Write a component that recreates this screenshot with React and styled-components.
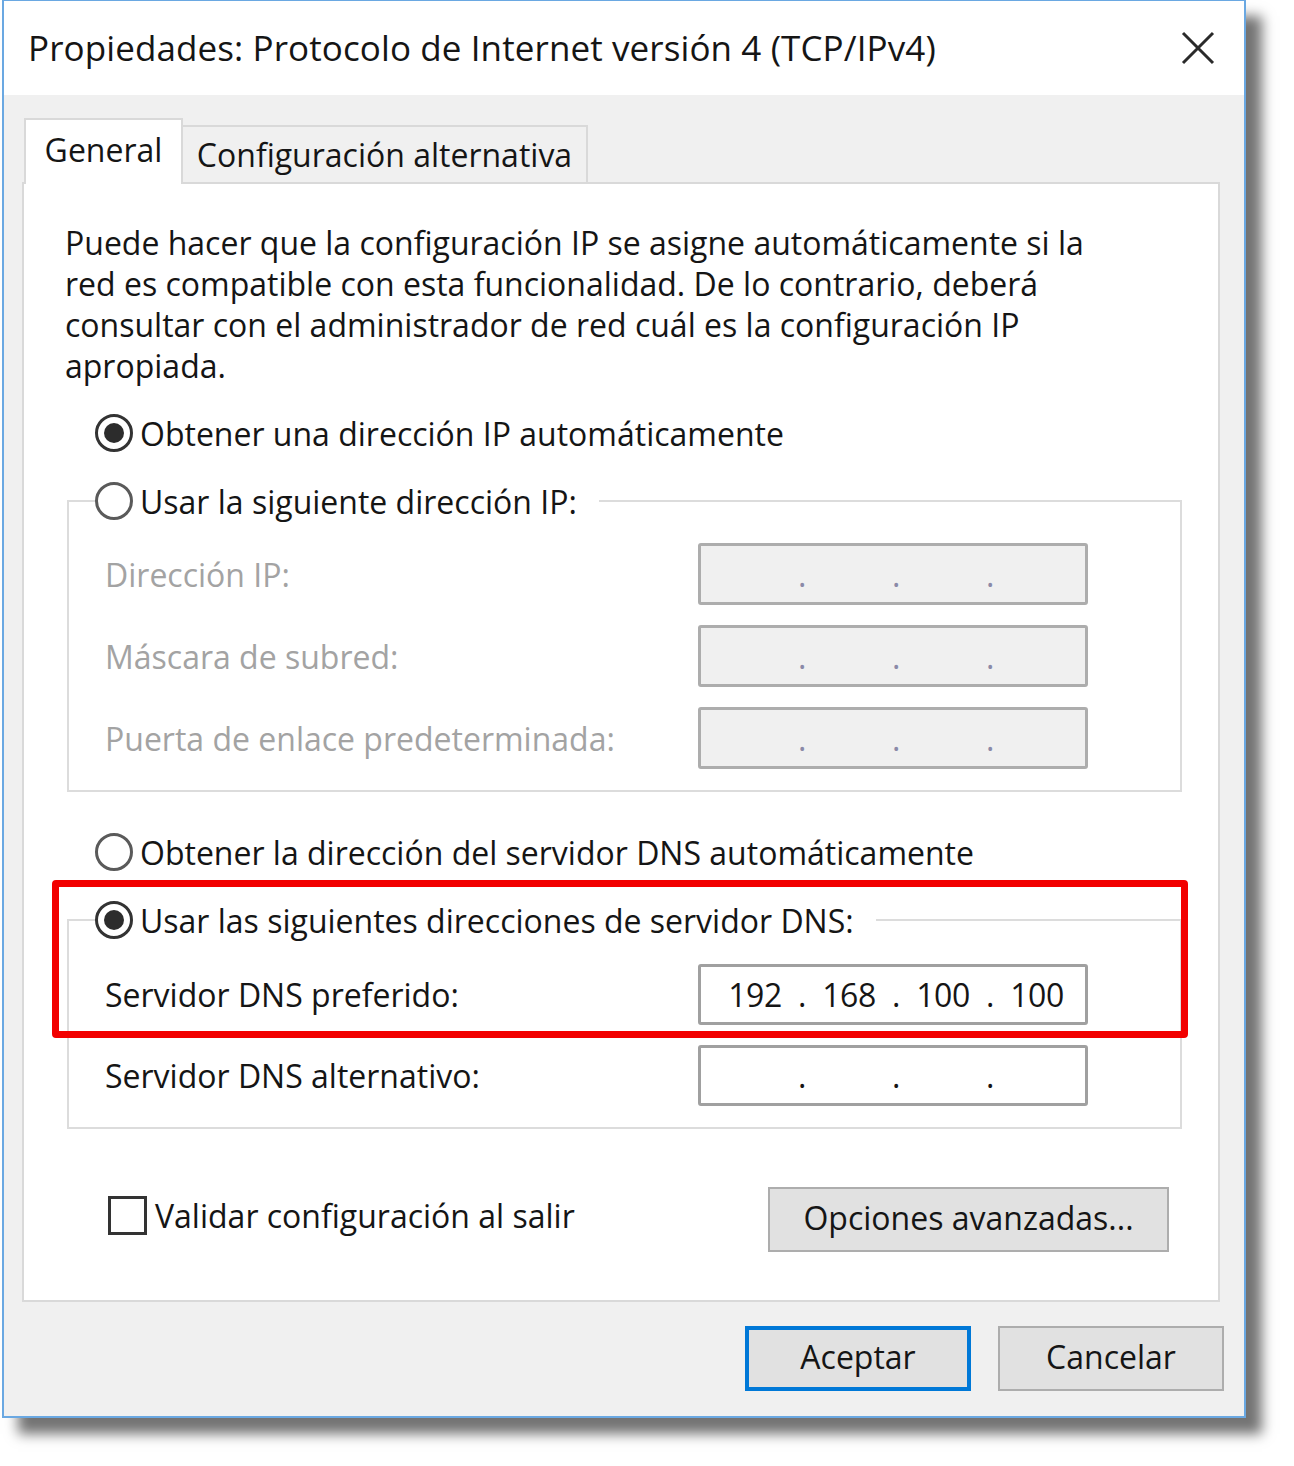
import React from 'react';
import styled, { createGlobalStyle } from 'styled-components';

const GlobalStyle = createGlobalStyle`
  html, body {
    margin: 0;
    padding: 0;
    background: #ffffff;
  }
  body {
    font-family: "Open Sans", "Noto Sans", sans-serif;
    color: #111;
  }
`;

const Page = styled.div`
  width: 1294px;
  height: 1466px;
  padding: 0 0 0 2px;
  box-sizing: border-box;
`;

const Window = styled.div`
  width: 1244px;
  height: 1418px;
  box-sizing: border-box;
  border: 2px solid #6aa8e2;
  border-top-width: 1px;
  background: #f0f0f0;
  box-shadow: 16px 16px 12px rgba(0, 0, 0, 0.55);
  display: flex;
  flex-direction: column;
`;

const TitleBar = styled.div`
  height: 94px;
  flex: none;
  background: #ffffff;
  display: flex;
  align-items: center;
  justify-content: space-between;
  padding: 0 28px 0 24px;
  box-sizing: border-box;
`;

const Title = styled.div`
  font-size: 35px;
  letter-spacing: 0.1px;
  color: #151515;
  margin-top: -2px;
`;

const Content = styled.div`
  flex: 1;
  display: flex;
  flex-direction: column;
  padding: 23px 24px 0 18px;
  min-height: 0;
`;

const Tabs = styled.div`
  display: flex;
  align-items: flex-end;
  padding-left: 2px;
  position: relative;
  z-index: 1;
  margin-bottom: -2px;
`;

const Tab = styled.div`
  box-sizing: border-box;
  display: flex;
  align-items: center;
  justify-content: center;
  font-size: 32px;
  color: #151515;
  border: 2px solid #d9d9d9;
  border-bottom: ${p => (p.$active ? 'none' : '2px solid #d9d9d9')};
  background: ${p => (p.$active ? '#ffffff' : '#f0f0f0')};
  width: ${p => p.$w}px;
  height: ${p => (p.$active ? 66 : 59)}px;
  padding-bottom: ${p => (p.$active ? 6 : 0)}px;
  margin-left: ${p => (p.$active ? 0 : -2)}px;
`;

const Panel = styled.div`
  flex: 1;
  background: #ffffff;
  border: 2px solid #d9d9d9;
  padding: 38px 36px 0 41px;
  display: flex;
  flex-direction: column;
`;

const Text = styled.p`
  margin: 0;
  font-size: 32px;
  line-height: 41px;
  white-space: nowrap;
  color: #151515;
`;

const RadioRow = styled.label`
  display: flex;
  align-items: center;
  gap: 7px;
  height: 42px;
  margin-left: ${p => p.$indent || 0}px;
  margin-top: ${p => p.$top || 0}px;
  font-size: 32px;
  color: #151515;
  white-space: nowrap;
`;

const RadioDot = styled.span`
  width: 38px;
  height: 38px;
  box-sizing: border-box;
  border-radius: 50%;
  border: 3px solid ${p => (p.$checked ? '#333' : '#5a5a5a')};
  background: #fff;
  display: flex;
  align-items: center;
  justify-content: center;
  flex: none;
  &::after {
    content: '';
    display: ${p => (p.$checked ? 'block' : 'none')};
    width: 20px;
    height: 20px;
    border-radius: 50%;
    background: #2c2c2c;
  }
`;

const GroupWrap = styled.div`
  position: relative;
  margin: ${p => p.$top || 0}px 0 0 2px;
`;

const Group = styled.fieldset`
  margin: 0;
  min-inline-size: 0;
  border: 2px solid #dcdcdc;
  padding: ${p => p.$padTop}px 92px ${p => p.$padBottom}px 36px;
  display: flex;
  flex-direction: column;
  gap: 20px;
`;

const Legend = styled.legend`
  padding: 0 22px 0 0;
  margin-left: -10px;
`;

const FieldRow = styled.div`
  display: grid;
  grid-template-columns: 1fr 390px;
  align-items: center;
`;

const FieldLabel = styled.span`
  font-size: 32px;
  white-space: nowrap;
  color: ${p => (p.$disabled ? '#a3a3a3' : '#151515')};
`;

const IpBox = styled.div`
  box-sizing: border-box;
  height: ${p => p.$h || 62}px;
  border: 3px solid ${p => (p.$disabled ? '#adadad' : '#a0a0a0')};
  border-radius: 3px;
  background: ${p => (p.$disabled ? '#f0f0f0' : '#ffffff')};
  display: flex;
  align-items: center;
  padding-left: 11px;
  font-size: 32px;
  letter-spacing: -0.5px;
  color: #151515;
`;

const Octet = styled.span`
  width: 86px;
  text-align: center;
`;

const IpDot = styled.span`
  width: 8px;
  text-align: center;
  color: ${p => (p.$disabled ? '#8a8aa8' : '#151515')};
`;

const Highlight = styled.div`
  position: absolute;
  left: -15px;
  right: -6px;
  top: -19px;
  height: 158px;
  box-sizing: border-box;
  border: 7px solid #f20000;
  border-radius: 4px;
  pointer-events: none;
`;

const BottomRow = styled.div`
  display: flex;
  justify-content: space-between;
  align-items: flex-start;
  margin-top: 58px;
  padding-left: 43px;
  padding-right: 13px;
`;

const CheckRow = styled.label`
  display: flex;
  align-items: center;
  gap: 8px;
  margin-top: 7px;
  font-size: 32px;
  color: #151515;
`;

const CheckBox = styled.span`
  width: 39px;
  height: 39px;
  box-sizing: border-box;
  border: 3px solid #333;
  background: #fff;
  flex: none;
`;

const Button = styled.button`
  box-sizing: border-box;
  width: ${p => p.$w}px;
  height: 65px;
  background: #e1e1e1;
  border: ${p => (p.$default ? '4px solid #0078d7' : '2px solid #adadad')};
  font-family: inherit;
  font-size: 32px;
  color: #151515;
  padding: 0 0 4px;
  margin: 0;
`;

const Footer = styled.div`
  height: 114px;
  flex: none;
  display: flex;
  justify-content: flex-end;
  align-items: flex-start;
  gap: 27px;
  padding: 24px 20px 0 0;
  box-sizing: border-box;
`;

function CloseIcon() {
  return (
    <svg width="36" height="36" viewBox="0 0 36 36">
      <path d="M3 3 L33 33 M33 3 L3 33" stroke="#2a2a2a" strokeWidth="3" fill="none" />
    </svg>
  );
}

function IpField({ value, disabled, h }) {
  const parts = value ? value.split('.') : ['', '', '', ''];
  return (
    <IpBox $disabled={disabled} $h={h}>
      {parts.map((part, i) => (
        <React.Fragment key={i}>
          <Octet>{part}</Octet>
          {i < 3 && <IpDot $disabled={disabled}>.</IpDot>}
        </React.Fragment>
      ))}
    </IpBox>
  );
}

function Radio({ checked, children, indent, top }) {
  return (
    <RadioRow $indent={indent} $top={top}>
      <RadioDot $checked={checked} />
      {children}
    </RadioRow>
  );
}

export default function App() {
  return (
    <Page>
      <GlobalStyle />
      <Window>
        <TitleBar>
          <Title>Propiedades: Protocolo de Internet versión 4 (TCP/IPv4)</Title>
          <CloseIcon />
        </TitleBar>
        <Content>
          <Tabs>
            <Tab $active $w={159}>General</Tab>
            <Tab $w={407}>Configuración alternativa</Tab>
          </Tabs>
          <Panel>
            <Text>
              Puede hacer que la configuración IP se asigne automáticamente si la<br />
              red es compatible con esta funcionalidad. De lo contrario, deberá<br />
              consultar con el administrador de red cuál es la configuración IP<br />
              apropiada.
            </Text>
            <Radio checked indent={30} top={26}>Obtener una dirección IP automáticamente</Radio>
            <GroupWrap $top={26}>
              <Group $padTop={21} $padBottom={21}>
                <Legend>
                  <Radio>Usar la siguiente dirección IP:</Radio>
                </Legend>
                <FieldRow>
                  <FieldLabel $disabled>Dirección IP:</FieldLabel>
                  <IpField disabled />
                </FieldRow>
                <FieldRow>
                  <FieldLabel $disabled>Máscara de subred:</FieldLabel>
                  <IpField disabled />
                </FieldRow>
                <FieldRow>
                  <FieldLabel $disabled>Puerta de enlace predeterminada:</FieldLabel>
                  <IpField disabled />
                </FieldRow>
              </Group>
            </GroupWrap>
            <Radio indent={30} top={39}>Obtener la dirección del servidor DNS automáticamente</Radio>
            <GroupWrap $top={26}>
              <Group $padTop={23} $padBottom={21}>
                <Legend>
                  <Radio checked>Usar las siguientes direcciones de servidor DNS:</Radio>
                </Legend>
                <FieldRow>
                  <FieldLabel>Servidor DNS preferido:</FieldLabel>
                  <IpField value="192.168.100.100" h={61} />
                </FieldRow>
                <FieldRow>
                  <FieldLabel>Servidor DNS alternativo:</FieldLabel>
                  <IpField h={61} />
                </FieldRow>
              </Group>
              <Highlight />
            </GroupWrap>
            <BottomRow>
              <CheckRow>
                <CheckBox />
                Validar configuración al salir
              </CheckRow>
              <Button $w={401}>Opciones avanzadas...</Button>
            </BottomRow>
          </Panel>
        </Content>
        <Footer>
          <Button $default $w={226}>Aceptar</Button>
          <Button $w={226}>Cancelar</Button>
        </Footer>
      </Window>
    </Page>
  );
}
